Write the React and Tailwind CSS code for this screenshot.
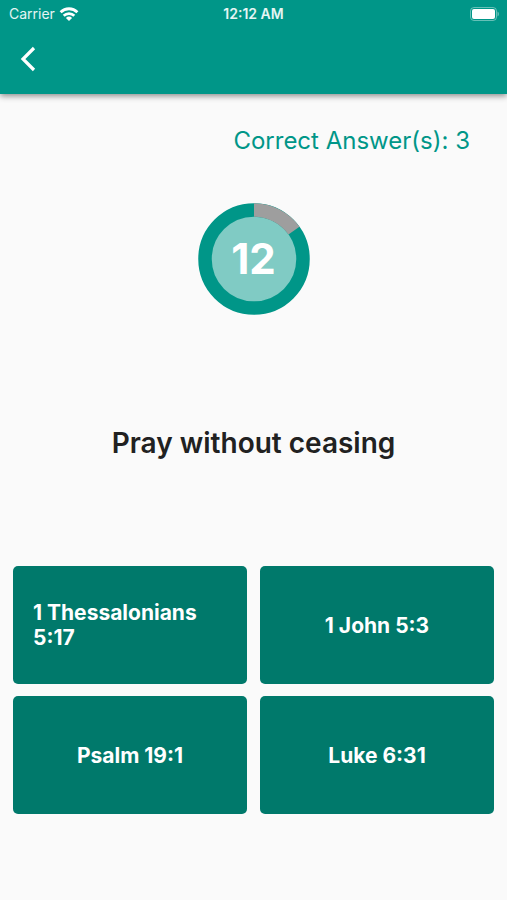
import React, { useState } from "react";

const TOTAL_SECONDS = 14;
const RADIUS = 49;
const LENGTH = 2 * Math.PI * RADIUS;

const quiz = {
  question: "Pray without ceasing",
  answers: ["1 Thessalonians 5:17", "1 John 5:3", "Psalm 19:1", "Luke 6:31"],
};

function StatusBar() {
  return (
    <div className="grid grid-cols-3 items-center h-7 px-2 text-sm leading-5 text-white/90">
      <div className="flex items-center gap-1 pl-px">
        <span>Carrier</span>
        <svg width="20" height="14" viewBox="0 0 20 14" fill="none" stroke="#fff" strokeWidth="2.8" aria-hidden="true">
          <path d="M1.6 5.2a12 12 0 0 1 16.8 0" />
          <path d="M4.7 8.7a7.6 7.6 0 0 1 10.6 0" />
          <path d="M10 14 6.9 10.9a4.5 4.5 0 0 1 6.2 0z" fill="#fff" stroke="none" />
        </svg>
      </div>
      <span className="text-center font-semibold">12:12 AM</span>
      <svg className="justify-self-end" width="30" height="14" viewBox="0 0 30 14" aria-hidden="true">
        <rect x="1.5" y="0.5" width="26" height="13" rx="3.5" fill="none" stroke="#fff" strokeOpacity="0.4" />
        <rect x="3" y="2" width="23" height="10" rx="2" fill="#fff" />
        <path d="M28.5 4.5v5q1.5-.8 1.5-2.5t-1.5-2.5z" fill="#fff" fillOpacity="0.4" />
      </svg>
    </div>
  );
}

function Timer({ seconds, elapsed }) {
  return (
    <div className="grid place-items-center" role="timer">
      <svg className="col-start-1 row-start-1" width="112" height="112" viewBox="0 0 112 112" aria-hidden="true">
        <circle cx="56" cy="56" r="43" fill="#80cbc4" />
        <circle cx="56" cy="56" r={RADIUS} fill="none" stroke="#009688" strokeWidth="13.5" />
        <circle
          cx="56"
          cy="56"
          r={RADIUS}
          fill="none"
          stroke="#9e9e9e"
          strokeWidth="13.5"
          strokeDasharray={`${LENGTH * elapsed} ${LENGTH}`}
          transform="rotate(-90 56 56)"
        />
      </svg>
      <span className="col-start-1 row-start-1 text-[42px] leading-none font-bold text-white">{seconds}</span>
    </div>
  );
}

export default function App() {
  const [seconds] = useState(12);
  const [correct, setCorrect] = useState(3);
  return (
    <div className="min-h-screen bg-[#fafafa] font-['Inter',sans-serif]">
      <header className="bg-[#009688] shadow-[0_2px_6px_rgba(0,0,0,0.45)]">
        <StatusBar />
        <div className="flex items-center h-[66px] px-3 pb-1">
          <button type="button" aria-label="Back" className="flex items-center justify-center size-8 text-white">
            <svg width="16" height="26" viewBox="0 0 16 26" fill="none" stroke="currentColor" strokeWidth="3.2" aria-hidden="true">
              <path d="M14 2 3 13l11 11" />
            </svg>
          </button>
        </div>
      </header>
      <main className="px-[13px]">
        <p className="pt-[31px] pr-6 text-right text-2xl leading-8 text-[#009688]">Correct Answer(s): {correct}</p>
        <div className="pt-[46px]">
          <Timer seconds={seconds} elapsed={(TOTAL_SECONDS - seconds + 0.12) / TOTAL_SECONDS} />
        </div>
        <h1 className="pt-28 text-center text-[28px] leading-8 font-semibold text-[#212121]">{quiz.question}</h1>
        <div className="grid grid-cols-2 auto-rows-[118px] gap-x-[13px] gap-y-3 pt-[107px]">
          {quiz.answers.map((answer, i) => (
            <button
              key={answer}
              type="button"
              onClick={() => i === 0 && setCorrect(correct + 1)}
              className="flex items-center justify-center rounded-[5px] bg-[#00796b] px-5 text-left text-[21px] leading-[25px] font-bold text-white"
            >
              {answer}
            </button>
          ))}
        </div>
      </main>
    </div>
  );
}
